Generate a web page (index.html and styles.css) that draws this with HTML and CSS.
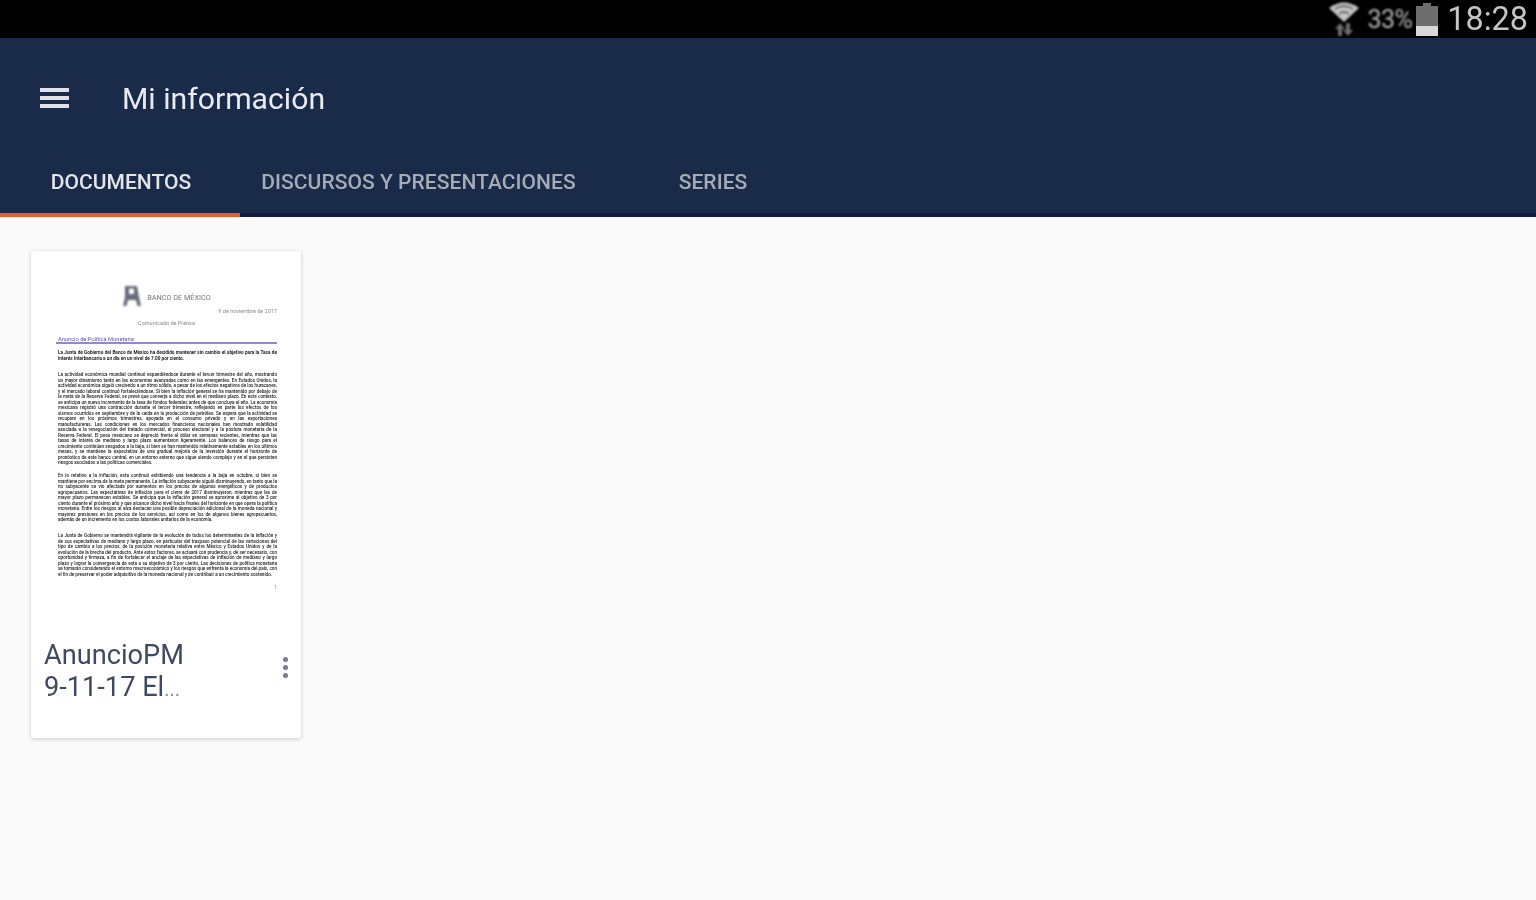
FILE: index.html
```html
<!DOCTYPE html>
<html lang="es">
<head>
  <meta charset="utf-8">
  <title>Mi información</title>
  <link rel="stylesheet" href="styles.css">
</head>
<body>

  <div class="status-bar">
    <svg class="wifi-icon" width="32" height="36" viewBox="0 0 32 36">
      <path d="M16 21 L1 7 Q16 -4 31 7 Z" fill="#c4c4c4"/>
      <path d="M7 8 Q16 2 25 8 M11 13 Q16 9 21 13" fill="none" stroke="#555" stroke-width="1.3"/>
      <path d="M12 22 L7 28 H10 V35 H14 V28 H17 Z M20 35 L25 29 H22 V22 H18 V29 H15 Z" fill="#6e6e6e"/>
    </svg>
    <span class="battery-text">33%</span>
    <div class="battery">
      <div class="battery-nub"></div>
      <div class="battery-body"><div class="battery-level"></div></div>
    </div>
    <span class="clock">18:28</span>
  </div>

  <header class="app-bar">
    <div class="title-row">
      <div class="menu-icon"><span></span><span></span><span></span></div>
      <h1 class="title">Mi información</h1>
    </div>
    <nav class="tabs">
      <div class="tab tab-docs active"><span class="tab-label">DOCUMENTOS</span></div>
      <div class="tab tab-talks"><span class="tab-label">DISCURSOS Y PRESENTACIONES</span></div>
      <div class="tab tab-series"><span class="tab-label">SERIES</span></div>
    </nav>
  </header>

  <main class="content">
    <div class="card">
      <div class="doc">
        <div class="doc-logo-row">
          <svg class="doc-logo" width="20" height="22" viewBox="0 0 20 22">
            <path d="M3 1 H15 L17 12 L19 21 H15.5 L14 15 H6 L4.5 21 H1 L3 12 Z M7 3.5 V9 H12 V3.5 Z" fill="#666b7b"/>
          </svg>
          <span class="doc-bank">BANCO DE MÉXICO</span>
        </div>
        <div class="doc-date">9 de noviembre de 2017</div>
        <div class="doc-kind">Comunicado de Prensa</div>
        <div class="doc-heading">Anuncio de Política Monetaria</div>
        <p class="doc-lead">La Junta de Gobierno del Banco de México ha decidido mantener sin cambio el objetivo para la Tasa de Interés Interbancaria a un día en un nivel de 7.00 por ciento.</p>
        <p class="doc-para para-1">La actividad económica mundial continuó expandiéndose durante el tercer trimestre del año, mostrando un mayor dinamismo tanto en las economías avanzadas como en las emergentes. En Estados Unidos, la actividad económica siguió creciendo a un ritmo sólido, a pesar de los efectos negativos de los huracanes, y el mercado laboral continuó fortaleciéndose. Si bien la inflación general se ha mantenido por debajo de la meta de la Reserva Federal, se prevé que converja a dicho nivel en el mediano plazo. En este contexto, se anticipa un nuevo incremento de la tasa de fondos federales antes de que concluya el año. La economía mexicana registró una contracción durante el tercer trimestre, reflejando en parte los efectos de los sismos ocurridos en septiembre y de la caída en la producción de petróleo. Se espera que la actividad se recupere en los próximos trimestres, apoyada en el consumo privado y en las exportaciones manufactureras. Las condiciones en los mercados financieros nacionales han mostrado volatilidad asociada a la renegociación del tratado comercial, al proceso electoral y a la postura monetaria de la Reserva Federal. El peso mexicano se depreció frente al dólar en semanas recientes, mientras que las tasas de interés de mediano y largo plazo aumentaron ligeramente. Los balances de riesgo para el crecimiento continúan sesgados a la baja, si bien se han mantenido relativamente estables en los últimos meses, y se mantiene la expectativa de una gradual mejoría de la inversión durante el horizonte de pronóstico de este banco central, en un entorno externo que sigue siendo complejo y en el que persisten riesgos asociados a las políticas comerciales.</p>
        <p class="doc-para para-2">En lo relativo a la inflación, esta continuó exhibiendo una tendencia a la baja en octubre, si bien se mantiene por encima de la meta permanente. La inflación subyacente siguió disminuyendo, en tanto que la no subyacente se vio afectada por aumentos en los precios de algunos energéticos y de productos agropecuarios. Las expectativas de inflación para el cierre de 2017 disminuyeron, mientras que las de mayor plazo permanecen estables. Se anticipa que la inflación general se aproxime al objetivo de 3 por ciento durante el próximo año y que alcance dicho nivel hacia finales del horizonte en que opera la política monetaria. Entre los riesgos al alza destacan una posible depreciación adicional de la moneda nacional y mayores presiones en los precios de los servicios, así como en los de algunos bienes agropecuarios, además de un incremento en los costos laborales unitarios de la economía.</p>
        <p class="doc-para para-3">La Junta de Gobierno se mantendrá vigilante de la evolución de todos los determinantes de la inflación y de sus expectativas de mediano y largo plazo, en particular del traspaso potencial de las variaciones del tipo de cambio a los precios, de la posición monetaria relativa entre México y Estados Unidos y de la evolución de la brecha del producto. Ante estos factores, se actuará con prudencia y, de ser necesario, con oportunidad y firmeza, a fin de fortalecer el anclaje de las expectativas de inflación de mediano y largo plazo y lograr la convergencia de esta a su objetivo de 3 por ciento. Las decisiones de política monetaria se tomarán considerando el entorno macroeconómico y los riesgos que enfrenta la economía del país, con el fin de preservar el poder adquisitivo de la moneda nacional y de contribuir a un crecimiento sostenido.</p>
        <div class="doc-page">1</div>
      </div>
      <div class="card-footer">
        <div class="card-name">AnuncioPM<br>9-11-17 El<span class="dots">...</span></div>
        <div class="more-icon"><span></span><span></span><span></span></div>
      </div>
    </div>
  </main>

</body>
</html>
```

FILE: styles.css
```css
* {
  box-sizing: border-box;
}

html, body {
  height: 100%;
}

body {
  margin: 0;
  font-family: Roboto, sans-serif;
  background: #fafafa;
  overflow: hidden;
}

.status-bar {
  height: 38px;
  background: #000;
  color: #b5b5b5;
  display: flex;
  align-items: center;
  justify-content: flex-end;
  padding-right: 8px;
}

.wifi-icon {
  margin-right: 7px;
  filter: blur(0.8px);
}

.battery-text {
  font-size: 25px;
  letter-spacing: -0.5px;
  margin-right: 4px;
  filter: blur(0.8px);
}

.battery {
  width: 22px;
  height: 33px;
  margin-right: 9px;
  display: flex;
  flex-direction: column;
  align-items: center;
  filter: blur(0.7px);
}

.battery-nub {
  width: 8px;
  height: 3px;
  background: #6e6e6e;
}

.battery-body {
  flex: 1;
  width: 100%;
  background: #6e6e6e;
  display: flex;
  align-items: flex-end;
}

.battery-level {
  width: 100%;
  height: 10px;
  background: #d8d8d8;
}

.clock {
  font-size: 32.4px;
  font-weight: 400;
  color: #c4c4c4;
  filter: blur(0.7px);
}

.app-bar {
  height: 179px;
  background: #1a2b49;
  border-bottom: 4px solid #0f1d45;
}

.title-row {
  height: 120px;
  display: flex;
  align-items: center;
  padding-left: 40px;
}

.menu-icon {
  width: 29px;
  display: flex;
  flex-direction: column;
  gap: 4px;
  margin-right: 53px;
  filter: blur(0.5px);
}

.menu-icon span {
  height: 4px;
  background: #dfe1e6;
}

.title {
  margin: 0;
  font-size: 30.2px;
  font-weight: 400;
  color: #e8ebef;
  filter: blur(0.7px);
}

.tabs {
  display: flex;
  height: 59px;
}

.tab {
  height: 48px;
  padding-top: 12px;
  text-align: center;
  line-height: 24px;
  font-size: 21px;
  font-weight: 500;
  color: #a5acb8;
  white-space: nowrap;
  letter-spacing: 0.05px;
}

.tab-label {
  filter: blur(0.7px);
  display: inline-block;
}

.tab-docs {
  width: 240px;
  padding-left: 2px;
}

.tab-talks {
  width: 357px;
}

.tab-series {
  width: 232px;
}

.tab.active {
  color: #e2e5ea;
  height: 59px;
  border-bottom: 4px solid #e5602b;
}

.content {
  padding: 34px 31px;
}

.card {
  width: 270px;
  height: 487px;
  background: #fff;
  border-radius: 2px;
  box-shadow: 0 1px 4px rgba(0,0,0,0.2);
}

.doc {
  height: 372px;
  padding: 34px 24px 0 25px;
  color: #8a8a8a;
}

.doc-logo-row {
  display: flex;
  align-items: center;
  justify-content: center;
  gap: 5px;
  height: 22px;
}

.doc-logo {
  filter: blur(0.8px);
}

.doc-bank {
  font-size: 7.3px;
  color: #777;
  margin-top: 2px;
  white-space: nowrap;
  filter: blur(0.4px);
}

.doc-date {
  font-size: 5.5px;
  text-align: right;
  margin-top: 1px;
  height: 9px;
  filter: blur(0.5px);
}

.doc-kind {
  font-size: 5.5px;
  text-align: center;
  margin-top: 3px;
  height: 8px;
  filter: blur(0.5px);
}

.doc-heading {
  margin-top: 5px;
  font-size: 5.7px;
  line-height: 8px;
  padding-top: 2px;
  color: #5b50a8;
  border-bottom: 2px solid #8f89cf;
  padding-left: 2px;
  height: 11px;
  white-space: nowrap;
  filter: blur(0.4px);
}

.doc-lead {
  margin: 6px 0 0 2px;
  height: 12px;
  font-size: 4.7px;
  line-height: 6px;
  font-weight: 700;
  color: #222;
  text-align: justify;
  overflow: hidden;
  filter: blur(0.5px);
}

.doc-para {
  margin: 0 0 0 2px;
  font-size: 4.6px;
  line-height: 5.5px;
  font-weight: 500;
  color: #222;
  text-align: justify;
  overflow: hidden;
  filter: blur(0.55px);
}

.para-1 {
  margin-top: 10px;
  height: 94px;
}

.para-2 {
  margin-top: 7px;
  height: 52px;
}

.para-3 {
  margin-top: 8px;
  height: 48px;
}

.doc-page {
  font-size: 5px;
  text-align: right;
  margin-top: 3px;
  filter: blur(0.4px);
}

.card-footer {
  display: flex;
  align-items: center;
  justify-content: space-between;
  padding: 16px 13px 0 13px;
}

.card-name {
  font-size: 27.2px;
  line-height: 32px;
  color: #3f4a60;
  filter: blur(0.7px);
}

.dots {
  color: #8a919e;
  font-size: 20px;
}

.more-icon {
  display: flex;
  flex-direction: column;
  gap: 3px;
  margin-bottom: 9px;
  filter: blur(0.5px);
}

.more-icon span {
  width: 5px;
  height: 5px;
  border-radius: 50%;
  background: #757d8c;
}
```
